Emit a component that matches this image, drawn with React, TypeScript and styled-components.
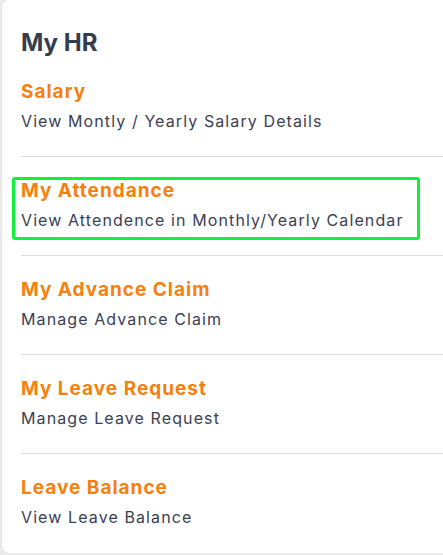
import React from "react";
import styled, { createGlobalStyle } from "styled-components";

const GlobalStyle = createGlobalStyle`
  html, body {
    margin: 0;
    padding: 0;
    background: #ebebeb;
  }
  body {
    font-family: Inter, "Open Sans", sans-serif;
  }
`;

type ItemTypes = {
  title: string;
  description: string;
  active?: boolean;
};

const items: ItemTypes[] = [
  { title: "Salary", description: "View Montly / Yearly Salary Details" },
  {
    title: "My Attendance",
    description: "View Attendence in Monthly/Yearly Calendar",
    active: true,
  },
  { title: "My Advance Claim", description: "Manage Advance Claim" },
  { title: "My Leave Request", description: "Manage Leave Request" },
  { title: "Leave Balance", description: "View Leave Balance" },
];

const App = () => {
  return (
    <>
      <GlobalStyle />
      <Page>
        <Card>
          <Heading>My HR</Heading>
          <List>
            {items.map((item) => (
              <Item key={item.title}>
                <Content $active={item.active}>
                  <ItemTitle>{item.title}</ItemTitle>
                  <ItemDesc>{item.description}</ItemDesc>
                </Content>
              </Item>
            ))}
          </List>
        </Card>
      </Page>
    </>
  );
};

export default App;

const Page = styled.div`
  width: 443px;
  height: 555px;
  overflow: hidden;
  padding: 0 0 2px 1px;
  box-sizing: border-box;
`;
const Card = styled.div`
  width: 470px;
  height: 553px;
  background: #fff;
  border-radius: 8px;
  border-left: 1px solid #e2e2e2;
  padding: 28px 0 0 19px;
  box-sizing: border-box;
`;
const Heading = styled.h2`
  margin: 0 0 22px;
  font-size: 24px;
  line-height: 30px;
  font-weight: 700;
  color: #343d4f;
`;
const List = styled.div`
  display: flex;
  flex-direction: column;
`;
const Item = styled.div`
  padding: 22px 0 24px;
  border-bottom: 1px solid #dedede;
  &:first-child {
    padding-top: 0;
  }
  &:last-child {
    border-bottom: none;
  }
`;
const Content = styled.div<{ $active?: boolean }>`
  position: relative;
  display: inline-flex;
  flex-direction: column;
  gap: 6px;
  &::after {
    content: "";
    display: ${({ $active }) => ($active ? "block" : "none")};
    position: absolute;
    top: -2px;
    bottom: -9px;
    left: -9px;
    right: -16px;
    border: 3px solid #0ef23a;
    border-radius: 3px;
    pointer-events: none;
  }
`;
const ItemTitle = styled.div`
  font-size: 19px;
  line-height: 24px;
  font-weight: 700;
  letter-spacing: 1px;
  color: #f77f0e;
`;
const ItemDesc = styled.div`
  font-size: 16px;
  line-height: 22px;
  letter-spacing: 1.1px;
  color: #3a4154;
`;
